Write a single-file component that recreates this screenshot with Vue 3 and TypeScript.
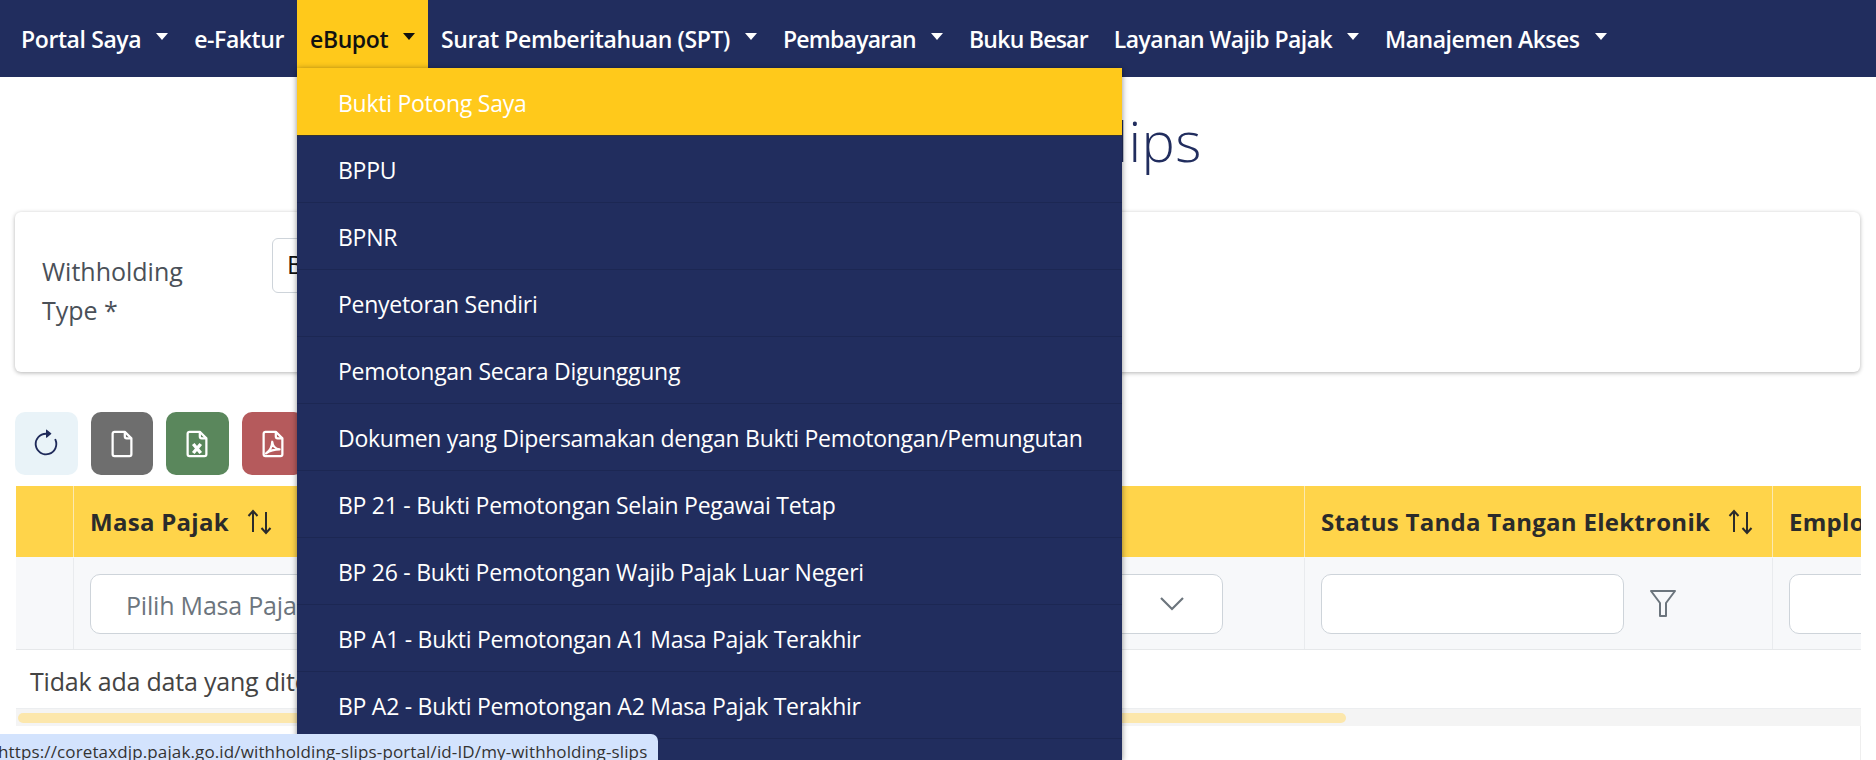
<script setup lang="ts">
interface NavItem {
  label: string
  caret?: boolean
  active?: boolean
  spacing?: number
}

const navItems: NavItem[] = [
  { label: 'Portal Saya', caret: true },
  { label: 'e-Faktur' },
  { label: 'eBupot', caret: true, active: true },
  { label: 'Surat Pemberitahuan (SPT)', caret: true },
  { label: 'Pembayaran', caret: true, spacing: -0.75 },
  { label: 'Buku Besar', spacing: -0.75 },
  { label: 'Layanan Wajib Pajak', caret: true, spacing: -0.55 },
  { label: 'Manajemen Akses', caret: true, spacing: -0.5 }
]

const menuItems: string[] = [
  'Bukti Potong Saya',
  'BPPU',
  'BPNR',
  'Penyetoran Sendiri',
  'Pemotongan Secara Digunggung',
  'Dokumen yang Dipersamakan dengan Bukti Pemotongan/Pemungutan',
  'BP 21 - Bukti Pemotongan Selain Pegawai Tetap',
  'BP 26 - Bukti Pemotongan Wajib Pajak Luar Negeri',
  'BP A1 - Bukti Pemotongan A1 Masa Pajak Terakhir',
  'BP A2 - Bukti Pemotongan A2 Masa Pajak Terakhir'
]
</script>

<template>
  <div class="page">
    <nav class="navbar">
      <a
        v-for="item in navItems"
        :key="item.label"
        class="nav-link"
        :class="{ 'nav-link--active': item.active }"
        :style="item.spacing ? { letterSpacing: `${item.spacing}px` } : undefined"
      >
        {{ item.label }}<span v-if="item.caret" class="caret" />
      </a>
    </nav>

    <ul class="menu">
      <li v-for="(item, i) in menuItems" :key="item" class="menu__item" :class="{ 'menu__item--active': i === 0 }">
        {{ item }}
      </li>
    </ul>

    <main class="content">
      <h1 class="title">My Withholding Slips</h1>

      <section class="card">
        <label class="card__label">Withholding Type *</label>
        <div class="card__select">BPPU</div>
      </section>

      <div class="toolbar">
        <button class="tbtn tbtn--refresh">
          <svg width="30" height="30" viewBox="0 0 16 16" fill="#1f2a5a">
            <path fill-rule="evenodd" d="M8 3a5 5 0 1 0 4.546 2.914.5.5 0 0 1 .908-.417A6 6 0 1 1 8 2v1z" />
            <path d="M8 4.466V.534a.25.25 0 0 1 .41-.192l2.36 1.966c.12.1.12.284 0 .384L8.41 4.658A.25.25 0 0 1 8 4.466z" />
          </svg>
        </button>
        <button class="tbtn tbtn--grey">
          <svg width="30" height="30" viewBox="0 0 16 16" fill="none" stroke="#fff" stroke-width="1.200" stroke-linejoin="round">
            <path d="M3 2.500a1 1 0 0 1 1-1h5.500l3.500 3.500v8.500a1 1 0 0 1-1 1H4a1 1 0 0 1-1-1z" />
            <path d="M9.500 1.500v2.500a1 1 0 0 0 1 1H13" />
          </svg>
        </button>
        <button class="tbtn tbtn--green">
          <svg width="30" height="30" viewBox="0 0 16 16" fill="none" stroke="#fff" stroke-width="1.200" stroke-linejoin="round">
            <path d="M3 2.500a1 1 0 0 1 1-1h5.500l3.500 3.500v8.500a1 1 0 0 1-1 1H4a1 1 0 0 1-1-1z" />
            <path d="M9.500 1.500v2.500a1 1 0 0 0 1 1H13" />
            <path d="M6 8l4 4.800M10 8l-4 4.800" stroke-width="1.800" />
          </svg>
        </button>
        <button class="tbtn tbtn--red">
          <svg width="30" height="30" viewBox="0 0 16 16" fill="none" stroke="#fff" stroke-width="1.200" stroke-linejoin="round">
            <path d="M3 2.500a1 1 0 0 1 1-1h5.500l3.500 3.500v8.500a1 1 0 0 1-1 1H4a1 1 0 0 1-1-1z" />
            <path d="M9.500 1.500v2.500a1 1 0 0 0 1 1H13" />
            <path d="M4.300 13c1.800-1.200 3.200-3.600 3.300-6.200.2 2.300 1.800 3.900 3.900 4.100-2.300 0-5.200.7-7.200 2.100z" />
          </svg>
        </button>
      </div>

      <div class="table">
        <div class="table__inner">
          <div class="row row--head">
            <div class="cell cell--check" />
            <div class="cell cell--masa">
              <span class="cell__text">Masa Pajak</span>
              <svg class="sort" width="25" height="26" viewBox="0 0 25 26" fill="none" stroke="#2b2b2b" stroke-width="2">
                <path d="M6 23V2M1.500 7L6 2l4.500 5" />
                <path d="M19 3v21M14.500 19l4.500 5 4.500-5" />
              </svg>
            </div>
            <div class="cell cell--status" />
            <div class="cell cell--ttd">
              <span class="cell__text">Status Tanda Tangan Elektronik</span>
              <svg class="sort" width="25" height="26" viewBox="0 0 25 26" fill="none" stroke="#2b2b2b" stroke-width="2">
                <path d="M6 23V2M1.500 7L6 2l4.500 5" />
                <path d="M19 3v21M14.500 19l4.500 5 4.500-5" />
              </svg>
            </div>
            <div class="cell cell--emp"><span class="cell__text">Employee</span></div>
          </div>
          <div class="row row--filter">
            <div class="cell cell--check" />
            <div class="cell cell--masa">
              <div class="field field--placeholder">Pilih Masa Pajak</div>
            </div>
            <div class="cell cell--status">
              <div class="field field--select">
                <svg width="24" height="14" viewBox="0 0 24 14" fill="none" stroke="#6c757d" stroke-width="2.200">
                  <path d="M1 1l11 11L23 1" />
                </svg>
              </div>
            </div>
            <div class="cell cell--ttd">
              <div class="field field--ttd" />
              <svg class="funnel" width="26" height="27" viewBox="0 0 26 27" fill="none" stroke="#6c757d" stroke-width="2" stroke-linejoin="round">
                <path d="M1 1h24l-9 12v13h-6V13z" />
              </svg>
            </div>
            <div class="cell cell--emp"><div class="field field--emp" /></div>
          </div>
        </div>
        <div class="table__empty">Tidak ada data yang ditemukan</div>
        <div class="scrollbar"><div class="scrollbar__thumb" /></div>
        <div class="table__foot" />
      </div>
    </main>

    <div class="status-url">https://coretaxdjp.pajak.go.id/withholding-slips-portal/id-ID/my-withholding-slips</div>
  </div>
</template>

<style>
body {
  overflow: hidden;
}
</style>

<style scoped>
.page {
  position: relative;
  width: 1876px;
  height: 760px;
  overflow: hidden;
  background: #fff;
  font-family: "Open Sans", "Noto Sans", sans-serif;
  color: #333;
}

.navbar {
  display: flex;
  align-items: stretch;
  height: 77px;
  padding-left: 8px;
  background: #212d5e;
}

.nav-link {
  display: flex;
  align-items: center;
  padding: 0 13px;
  color: #fff;
  font-size: 23px;
  font-weight: 600;
  letter-spacing: -0.4px;
  white-space: nowrap;
}

.nav-link--active {
  background: #ffc91b;
  color: #111;
}

.caret {
  width: 0;
  height: 0;
  margin-left: 15px;
  margin-top: -4px;
  border-top: 7px solid currentColor;
  border-left: 6.5px solid transparent;
  border-right: 6.5px solid transparent;
}

.menu {
  position: absolute;
  z-index: 5;
  top: 68px;
  left: 297px;
  width: 825px;
  height: 692px;
  margin: 0;
  padding: 0;
  list-style: none;
  overflow: hidden;
  background: #212d5e;
  box-shadow: 0 1px 6px rgba(0, 0, 0, 0.45);
}

.menu__item {
  display: flex;
  align-items: center;
  box-sizing: border-box;
  height: 67px;
  padding-top: 1px;
  padding-left: 41px;
  border-bottom: 1px solid #1c2753;
  color: #fff;
  font-size: 23px;
  letter-spacing: -0.27px;
  white-space: nowrap;
}

.menu__item--active {
  height: 68px;
  padding-top: 3px;
  background: #ffc91b;
  border-bottom-color: #333;
}

.content {
  padding: 0 15px;
}

.title {
  margin: 27px 0 0;
  height: 108px;
  color: #212d5e;
  font-size: 56px;
  font-weight: 300;
  line-height: 72px;
  letter-spacing: 0.4px;
  text-align: center;
}

.card {
  display: flex;
  box-sizing: border-box;
  width: 1845px;
  height: 160px;
  padding: 26px 27px;
  background: #fff;
  border-radius: 6px;
  box-shadow: 0 1px 4px rgba(0, 0, 0, 0.3);
}

.card__label {
  width: 165px;
  margin-right: 65px;
  padding-top: 14px;
  color: #4a5058;
  font-size: 25px;
  line-height: 39px;
}

.card__select {
  box-sizing: border-box;
  width: 500px;
  height: 55px;
  padding: 8px 14px;
  border: 1px solid #ced4da;
  border-radius: 6px;
  font-size: 25px;
  color: #111;
}

.toolbar {
  display: flex;
  gap: 13px;
  margin-top: 40px;
}

.tbtn {
  display: flex;
  align-items: center;
  justify-content: center;
  width: 62.500px;
  height: 63px;
  padding: 0;
  border: none;
  border-radius: 10px;
}

.tbtn--refresh {
  background: #e9f3f8;
}

.tbtn--grey {
  background: #6e6e6e;
}

.tbtn--green {
  background: #5a875c;
}

.tbtn--red {
  background: #b55a5c;
}

.table {
  width: 1845px;
  margin-top: 11px;
  margin-left: 1px;
  overflow: hidden;
}

.table__inner {
  overflow: hidden;
}

.row {
  display: flex;
  width: 2100px;
}

.row--head {
  height: 71px;
  background: #ffd44a;
  color: #2b2b2b;
}

.row--filter {
  box-sizing: border-box;
  height: 93px;
  padding-top: 1px;
  background: #f7f8fa;
  border-bottom: 1px solid #e6e8ea;
}

.cell {
  display: flex;
  flex: none;
  align-items: center;
  box-sizing: border-box;
  padding: 0 16px;
  border-right: 1px solid #e9ebee;
}

.row--head .cell {
  border-right-color: #fbe9b0;
}

.cell--check {
  width: 58px;
}

.cell--masa {
  width: 600px;
}

.cell--status {
  width: 631px;
}

.cell--ttd {
  width: 468px;
}

.cell--emp {
  width: 320px;
  border-right: none;
}

.cell__text {
  font-size: 24px;
  font-weight: 700;
  letter-spacing: 0.28px;
  white-space: nowrap;
}

.sort {
  flex: none;
  margin-left: 18px;
}

.field {
  box-sizing: border-box;
  height: 60px;
  background: #fff;
  border: 1px solid #ced4da;
  border-radius: 10px;
}

.field--placeholder {
  width: 100%;
  padding: 13px 35px;
  color: #6c757d;
  font-size: 25px;
  letter-spacing: -0.2px;
}

.field--select {
  display: flex;
  flex: none;
  align-items: center;
  justify-content: flex-end;
  width: 533px;
  padding-right: 38px;
}

.field--ttd {
  flex: none;
  width: 303px;
}

.field--emp {
  width: 300px;
}

.funnel {
  flex: none;
  margin-left: 26px;
}

.table__empty {
  height: 59px;
  padding: 14px 14px 0;
  box-sizing: border-box;
  border-bottom: 1px solid #eceef0;
  color: #444;
  font-size: 25px;
  letter-spacing: -0.2px;
}

.scrollbar {
  box-sizing: border-box;
  height: 17px;
  padding: 4px 2px 3px;
  background: #f4f4f4;
}

.scrollbar__thumb {
  width: 1328px;
  height: 10px;
  background: #fce7ac;
  border-radius: 5px;
}

.table__foot {
  height: 40px;
  border-right: 1px solid #eee;
}

.status-url {
  position: absolute;
  z-index: 10;
  left: 0;
  bottom: 0;
  box-sizing: border-box;
  width: 658px;
  height: 26px;
  padding-top: 4px;
  background: #d3e3fd;
  border-top-right-radius: 7px;
  color: #333;
  font-size: 17px;
  letter-spacing: 0.13px;
  line-height: 27px;
  text-indent: -2px;
  white-space: nowrap;
  overflow: hidden;
}
</style>
